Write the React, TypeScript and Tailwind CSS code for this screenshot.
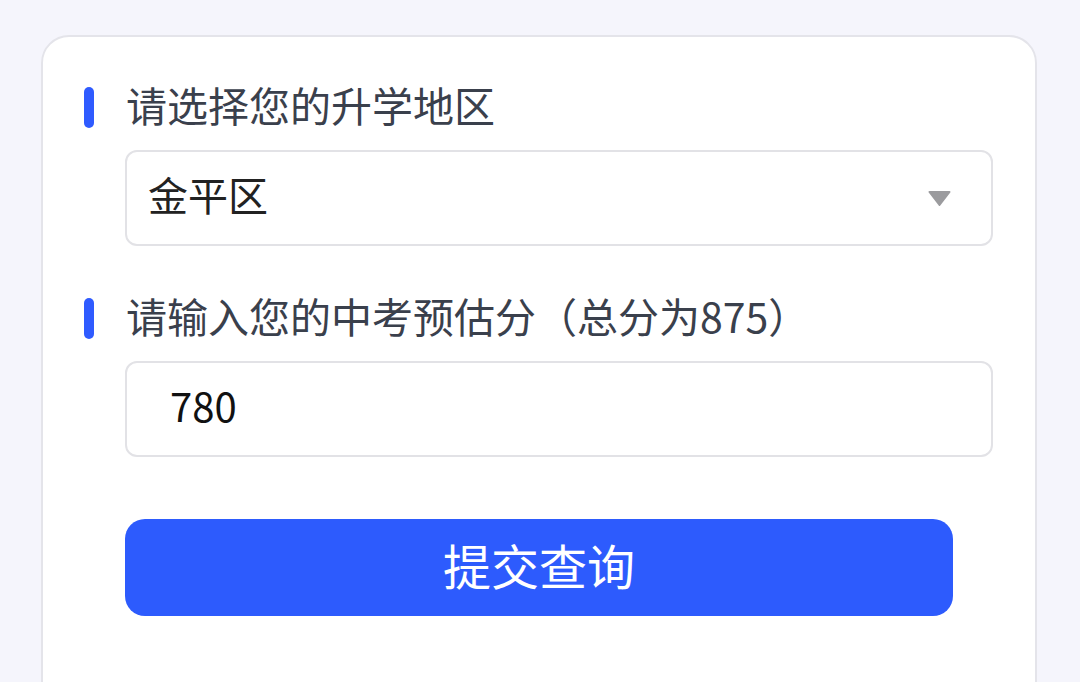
import React from "react"

const font = { fontFamily: '"Noto Sans CJK SC", "Noto Sans", sans-serif' }

function Label({ text }: { text: string }) {
  return (
    <div className="flex items-center h-[41px]">
      <span className="w-[10px] h-[41px] rounded-full bg-[#2f5bff]" />
      <span className="ml-[32px] mb-[6px] text-[41px] leading-none text-[#3a404c]">{text}</span>
    </div>
  )
}

export default function App() {
  return (
    <div className="w-[1080px] h-[682px] overflow-hidden bg-[#f5f5fc]" style={font}>
      <div className="pt-[35px] pl-[41px] pr-[43px]">
        <div className="h-[700px] bg-white border-2 border-[#e4e4ea] rounded-[28px] pt-[50px] pl-[41px] pr-[42px]">
          <Label text="请选择您的升学地区" />
          <div className="ml-[41px] mt-[22px] h-[96px] border-2 border-[#e2e2e6] rounded-[12px] flex items-center justify-between pl-[21px] pr-[40px]">
            <span className="mb-[9px] text-[40px] leading-none text-[#222]">金平区</span>
            <svg width="23" height="15" viewBox="0 0 23 15">
              <path d="M1.5 1 H21.5 L11.5 14 Z" fill="#9b9b9e" stroke="#9b9b9e" strokeWidth="2" strokeLinejoin="round" />
            </svg>
          </div>

          <div className="mt-[52px]">
            <Label text="请输入您的中考预估分（总分为875）" />
          </div>
          <div className="ml-[41px] mt-[22px] h-[96px] border-2 border-[#e2e2e6] rounded-[12px] flex items-center pl-[43px]">
            <span className="mb-[9px] text-[40px] leading-none text-[#111]">780</span>
          </div>

          <div className="ml-[41px] mr-[40px] mt-[62px]">
            <button className="w-full h-[97px] rounded-[20px] bg-[#2d5bfd] text-white text-[48px] leading-none flex items-center justify-center">
              <span className="mb-[8px]">提交查询</span>
            </button>
          </div>
        </div>
      </div>
    </div>
  )
}
